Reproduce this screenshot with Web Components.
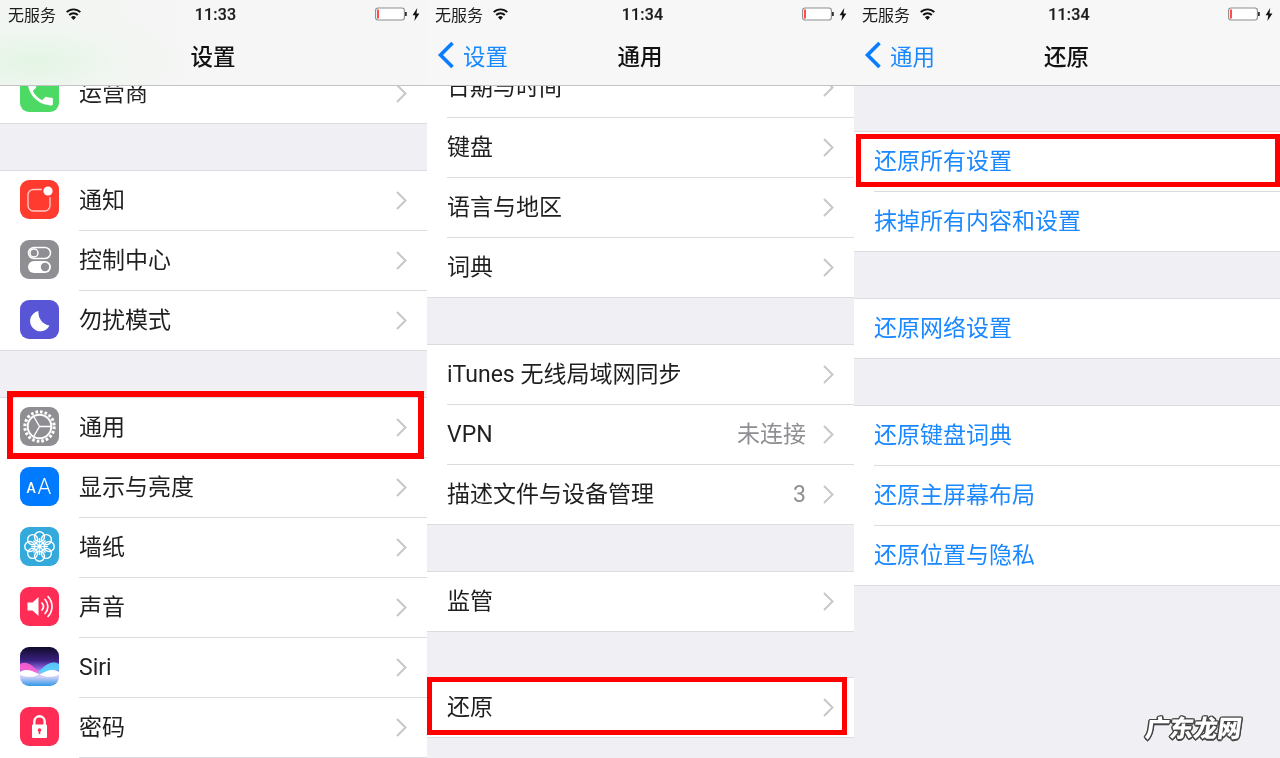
<!DOCTYPE html>
<html lang="zh-CN"><head><meta charset="utf-8"><title>iOS 还原设置</title>
<style>
html,body{margin:0;height:758px;overflow:hidden;background:#efeff4}
body{font-family:Roboto,"Noto Sans CJK SC",sans-serif}
</style></head><body>
<ios-app>
  <ios-screen time="11:33" title="设置" offset="-22" tint>
    <ios-group><ios-row icon="phone" chevron last>运营商</ios-row></ios-group>
    <ios-group>
      <ios-row icon="notify" chevron>通知</ios-row>
      <ios-row icon="control" chevron>控制中心</ios-row>
      <ios-row icon="moon" chevron last>勿扰模式</ios-row>
    </ios-group>
    <ios-group>
      <ios-row icon="gear" chevron>通用</ios-row>
      <ios-row icon="aa" chevron>显示与亮度</ios-row>
      <ios-row icon="flower" chevron>墙纸</ios-row>
      <ios-row icon="sound" chevron>声音</ios-row>
      <ios-row icon="siri" chevron>Siri</ios-row>
      <ios-row icon="lock" chevron>密码</ios-row>
    </ios-group>
    <red-mark slot="over" x="7" y="391" w="417" h="68" b="6"></red-mark>
  </ios-screen>
  <ios-screen time="11:34" title="通用" back="设置" offset="-28">
    <ios-group>
      <ios-row chevron>日期与时间</ios-row>
      <ios-row chevron>键盘</ios-row>
      <ios-row chevron>语言与地区</ios-row>
      <ios-row chevron last>词典</ios-row>
    </ios-group>
    <ios-group>
      <ios-row chevron>iTunes 无线局域网同步</ios-row>
      <ios-row chevron value="未连接">VPN</ios-row>
      <ios-row chevron value="3" last>描述文件与设备管理</ios-row>
    </ios-group>
    <ios-group><ios-row chevron last>监管</ios-row></ios-group>
    <ios-group style="margin-top:-1px"><ios-row chevron last>还原</ios-row></ios-group>
    <red-mark slot="over" x="0" y="677" w="420" h="58" b="5"></red-mark>
  </ios-screen>
  <ios-screen time="11:34" title="还原" back="通用" offset="46">
    <ios-group>
      <ios-row blue>还原所有设置</ios-row>
      <ios-row blue last>抹掉所有内容和设置</ios-row>
    </ios-group>
    <ios-group><ios-row blue last>还原网络设置</ios-row></ios-group>
    <ios-group>
      <ios-row blue>还原键盘词典</ios-row>
      <ios-row blue>还原主屏幕布局</ios-row>
      <ios-row blue last>还原位置与隐私</ios-row>
    </ios-group>
    <red-mark slot="over" x="2" y="134" w="424" h="53" b="5"></red-mark>
    <water-mark slot="over">广东龙网</water-mark>
  </ios-screen>
</ios-app>
<script>
const ANG=[0,45,90,135,180,225,270,315];
const ICONS = {
 phone:`<rect width="39" height="39" rx="9" fill="#4cd964"/><path transform="translate(3.5 3) scale(1.4)" fill="#fff" d="M6.62 10.79c1.44 2.83 3.76 5.14 6.59 6.59l2.2-2.2c.27-.27.67-.36 1.02-.24 1.12.37 2.33.57 3.57.57.55 0 1 .45 1 1V20c0 .55-.45 1-1 1-9.39 0-17-7.61-17-17 0-.55.45-1 1-1h3.5c.55 0 1 .45 1 1 0 1.25.2 2.45.57 3.57.11.35.03.74-.25 1.02l-2.2 2.2z"/>`,
 notify:`<rect width="39" height="39" rx="9" fill="#ff3b30"/><rect x="8" y="9.500" width="22" height="21.500" rx="5.500" fill="none" stroke="#ffc9c5" stroke-width="1.400"/><circle cx="28" cy="11" r="6.600" fill="#ff3b30"/><circle cx="28" cy="11" r="4.600" fill="#fff"/>`,
 control:`<rect width="39" height="39" rx="9" fill="#8e8e93"/><rect x="8.500" y="7.500" width="22" height="11" rx="5.500" fill="none" stroke="#fff" stroke-width="1.500"/><circle cx="14" cy="13" r="4" fill="none" stroke="#fff" stroke-width="1.500"/><rect x="8" y="21" width="23" height="12" rx="6" fill="#fff"/><circle cx="25" cy="27" r="4.200" fill="#8e8e93"/>`,
 moon:`<rect width="39" height="39" rx="9" fill="#5856d6"/><path fill="#fff" d="M18.500 11A10.200 10.200 0 1 0 29.500 25.500 13 13 0 0 1 18.500 11z"/>`,
 gear:`<rect width="39" height="39" rx="9" fill="#8e8e93"/><g fill="none" stroke="#fff"><circle cx="19.500" cy="19.500" r="14.700" stroke-width="3" stroke-dasharray="2.700 1.920"/><circle cx="19.500" cy="19.500" r="11.800" stroke-width="2"/><path stroke-width="1.400" d="M19.500 19.500H31M19.500 19.500l-5.800-10M19.500 19.500l-5.800 10"/></g>`,
 aa:`<rect width="39" height="39" rx="9" fill="#007aff"/><text x="6.500" y="26" font-family="Roboto" font-weight="500" font-size="14" fill="#fff">A</text><text x="17.500" y="26.500" font-family="Roboto" font-weight="300" font-size="22" fill="#fff">A</text>`,
 flower:`<rect width="39" height="39" rx="9" fill="#34aadc"/><g fill="none" stroke="#fff" stroke-width="1.400">${ANG.map(a=>`<circle cx="19.500" cy="9.800" r="5" transform="rotate(${a} 19.500 19.500)"/>`).join('')}${ANG.map(a=>`<path d="M19.500 17.500V11" transform="rotate(${a} 19.500 19.500)"/>`).join('')}</g><circle cx="19.500" cy="19.500" r="2.200" fill="#fff"/>`,
 sound:`<rect width="39" height="39" rx="9" fill="#ff2d55"/><path fill="#fff" d="M7.500 15.500h5l6-5.500v19l-6-5.500h-5z"/><g fill="none" stroke="#fff" stroke-width="1.700" stroke-linecap="round"><path d="M22 16a5.500 5.500 0 0 1 0 7"/><path d="M25 12.500a10 10 0 0 1 0 14"/><path d="M28 9.500a14.500 14.500 0 0 1 0 20"/></g>`,
 siri:`<defs><linearGradient id="sg" x1="0" y1="0" x2="0" y2="1"><stop offset="0" stop-color="#100c2a"/><stop offset=".35" stop-color="#3a2180"/><stop offset=".55" stop-color="#8f62e0"/><stop offset=".75" stop-color="#d9d2f8"/><stop offset="1" stop-color="#2f98e8"/></linearGradient><clipPath id="sc"><rect width="39" height="39" rx="9"/></clipPath></defs><g clip-path="url(#sc)"><rect width="39" height="39" fill="url(#sg)"/><path fill="#ff5fd0" opacity=".9" d="M0 17C8 13 13 20 19 25 13 27 6 23 0 23z"/><path fill="#58d6ff" opacity=".9" d="M39 17C30 12 24 20 18 25 25 28 33 24 39 23z"/><path fill="#fff" d="M0 25C7 21 12 24 19.500 27.500 12 31 6 30 0 28zM39 25C32 21 27 24 19.500 27.500 27 31 33 30 39 28z"/></g>`,
 lock:`<rect width="39" height="39" rx="9" fill="#ff2d55"/><path fill="none" stroke="#fff" stroke-width="2.400" d="M14.300 19v-4.500a5.200 5.200 0 0 1 10.400 0V19"/><rect x="12" y="17.500" width="15" height="13.500" rx="1" fill="#fff"/><circle cx="19.500" cy="23" r="1.800" fill="#ff2d55"/><rect x="18.700" y="23" width="1.600" height="4" fill="#ff2d55"/>`
};
function define(name,make){customElements.define(name,class extends HTMLElement{connectedCallback(){if(this.shadowRoot)return;this.attachShadow({mode:'open'}).innerHTML=make(this);}});}

define('ios-app',()=>`<style>:host{display:grid;grid-template-columns:427px 427px 426px;width:1280px;height:758px;overflow:hidden;position:relative;filter:blur(.35px);background:#efeff4}</style><slot></slot>`);

define('ios-screen',h=>{
 const back=h.getAttribute('back');
 const off=h.getAttribute('offset');
 const bg=h.hasAttribute('tint')?'radial-gradient(150px 55px at 35px 62px,#e3f5e4 0,rgba(240,246,240,.6) 60%,transparent 100%),linear-gradient(90deg,#f2f5f2,#f6f6f6 60%)':'#f7f7f8';
 return `<style>
 :host{display:flex;flex-direction:column;position:relative;height:758px;overflow:hidden;background:#efeff4;color:#000}
 header{position:relative;z-index:2;flex:none;height:85px;border-bottom:1px solid #c4c4c6;background:${bg};display:flex;flex-direction:column}
 .status{height:28px;display:grid;grid-template-columns:1fr auto 1fr;align-items:center;padding:0 7px 0 8px;font-size:16px;color:#1c1c1c}
 .left{display:flex;align-items:center;gap:10px}
 .time{font:500 16px Roboto,sans-serif;letter-spacing:.2px;transform:translateX(1.500px);-webkit-text-stroke:.2px #1c1c1c}
 .right{display:flex;justify-content:flex-end;align-items:center;gap:5px}
 .nav{flex:1;display:grid;grid-template-columns:1fr auto 1fr;align-items:center;padding-bottom:4px}
 .back{display:flex;align-items:center;color:#1a88ff;font-size:22.5px;padding-left:10px;gap:8px}
 .title{font-size:22.5px;font-weight:500;color:#111;margin-left:-1px}
 main{flex:1;margin-top:${off}px;min-height:0}
 </style>
 <header>
  <div class="status">
   <div class="left"><span>无服务</span>
    <svg width="15" height="12" viewBox="0 0 15 12"><g fill="none" stroke="#111" stroke-width="1.900"><path d="M.7 4.200a9.600 9.600 0 0 1 13.600 0"/><path d="M3.200 7a6 6 0 0 1 8.600 0"/></g><path fill="#111" d="M7.500 12 5 9.200a3.600 3.600 0 0 1 5 0z"/></svg></div>
   <div class="time">${h.getAttribute('time')}</div>
   <div class="right">
    <svg width="32" height="14" viewBox="0 0 32 14"><rect x=".6" y="1" width="28.800" height="12" rx="2.500" fill="#fff" stroke="#8d8d8d" stroke-width="1.100"/><rect x="2" y="2.500" width="2" height="9" fill="#ff4d4d"/><rect x="30" y="5" width="1.800" height="4" fill="#333"/></svg>
    <svg width="8" height="13" viewBox="0 0 8 13"><path fill="#111" d="M5.200 0 .6 7.300h2.700L2.400 13l5-7.600H4.500z"/></svg>
   </div>
  </div>
  <div class="nav">
   <div>${back?`<div class="back"><svg width="18" height="28" viewBox="0 0 18 28"><path d="M15.500 2 3.500 14l12 12" fill="none" stroke="#0a7cff" stroke-width="3.600"/></svg><span>${back}</span></div>`:''}</div>
   <div class="title">${h.getAttribute('title')}</div><div></div>
  </div>
 </header>
 <main><slot></slot></main><slot name="over"></slot>`;
});

define('ios-group',()=>`<style>:host{display:block;background:#fff;margin-bottom:47px;box-shadow:0 -1px 0 #dcdce0}</style><slot></slot>`);

define('ios-row',h=>{
 const ic=h.getAttribute('icon'), val=h.getAttribute('value'), blue=h.hasAttribute('blue'), ch=h.hasAttribute('chevron'), last=h.hasAttribute('last');
 const indent=last?0:(ic?79:20);
 return `<style>
 :host{display:flex;align-items:center;height:60px;box-sizing:border-box;padding:0 20px 2px;gap:20px;font-size:23px;line-height:1;color:${blue?'#1a88ff':'#1f1f1f'};background:linear-gradient(#dcdce0,#dcdce0) no-repeat ${indent}px 100%/100% 1px}
 .ic{flex:none;width:39px;height:39px;display:block;margin-bottom:1px}
 .b{flex:1;min-width:0;display:flex;align-items:center}
 .t{flex:1;white-space:nowrap}
 .v{color:#8e8e93;margin-right:17px}
 svg.c{flex:none;display:block}
 </style>${ic?`<svg class="ic" viewBox="0 0 39 39">${ICONS[ic]}</svg>`:''}
 <div class="b"><span class="t"><slot></slot></span>${val?`<span class="v">${val}</span>`:''}${ch?`<svg class="c" width="11" height="19" viewBox="0 0 11 19"><path d="M1 1l8.500 8.500L1 18" fill="none" stroke="#c7c7cc" stroke-width="2"/></svg>`:''}</div>`;
});

define('red-mark',h=>{
 const g=n=>h.getAttribute(n);
 return `<style>:host{position:absolute;z-index:3;left:${g('x')}px;top:${g('y')}px;width:${g('w')}px;height:${g('h')}px;box-sizing:border-box;border:${g('b')}px solid #f00;pointer-events:none}</style>`;
});

define('water-mark',()=>`<style>:host{position:absolute;z-index:3;right:38px;top:712px;font:900 24px/30px "Noto Sans CJK SC",sans-serif;color:#fff;text-shadow:-1.500px 0 #444,1.500px 0 #444,0 -1.500px #444,0 1.500px #444,-1px -1px #444,1px -1px #444,-1px 1px #444,1px 1px #444;transform:skewX(-8deg);white-space:nowrap}</style><slot></slot>`);
</script>
</body></html>
